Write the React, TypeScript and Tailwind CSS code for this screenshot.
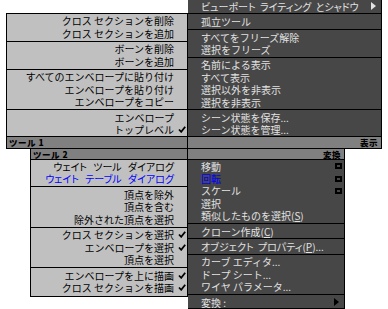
import React from "react";

type Item =
  | "sep"
  | {
      label: React.ReactNode;
      check?: boolean;
      box?: boolean;
      arrow?: boolean;
      blue?: boolean;
      palt?: boolean;
    };

const font = "font-['Noto_Sans_CJK_JP',sans-serif]";

const Check = () => (
  <svg width="8" height="7" viewBox="0 0 8 7">
    <path d="M1 3.5 L3.2 5.8 L7.2 0.8" stroke="#000" strokeWidth="1.8" fill="none" />
  </svg>
);

const U = ({ children }: { children: string }) => <span className="underline underline-offset-1">{children}</span>;

const topLeft: Item[] = [
  { label: "クロス セクションを削除" },
  { label: "クロス セクションを追加" },
  "sep",
  { label: "ボーンを削除" },
  { label: "ボーンを追加" },
  "sep",
  { label: "すべてのエンベロープに貼り付け" },
  { label: "エンベロープを貼り付け" },
  { label: "エンベロープをコピー" },
  "sep",
  { label: "エンベロープ" },
  { label: "トップレベル", check: true },
];

const topRight: Item[] = [
  { label: "ビューポート ライティング とシャドウ", arrow: true, palt: true },
  "sep",
  { label: "孤立ツール" },
  "sep",
  { label: "すべてをフリーズ解除" },
  { label: "選択をフリーズ" },
  "sep",
  { label: "名前による表示" },
  { label: "すべて表示" },
  { label: "選択以外を非表示" },
  { label: "選択を非表示" },
  "sep",
  { label: "シーン状態を保存..." },
  { label: "シーン状態を管理..." },
];

const bottomLeft: Item[] = [
  { label: "ウェイト ツール ダイアログ", palt: true },
  { label: "ウェイト テーブル ダイアログ", blue: true, palt: true },
  "sep",
  { label: "頂点を除外" },
  { label: "頂点を含む" },
  { label: "除外された頂点を選択" },
  "sep",
  { label: "クロス セクションを選択", check: true },
  { label: "エンベロープを選択", check: true },
  { label: "頂点を選択" },
  "sep",
  { label: "エンベロープを上に描画", check: true },
  { label: "クロス セクションを描画", check: true },
];

const bottomRight: Item[] = [
  { label: "移動", box: true },
  { label: "回転", box: true, blue: true },
  { label: "スケール", box: true },
  { label: "選択" },
  { label: <>類似したものを選択(<U>S</U>)</> },
  "sep",
  { label: <>クローン作成(<U>C</U>)</> },
  "sep",
  { label: <>オブジェクト プロパティ(<U>P</U>)...</>, palt: true },
  "sep",
  { label: "カーブ エディタ..." },
  { label: "ドープ シート..." },
  { label: "ワイヤ パラメータ..." },
  "sep",
  { label: "変換 :", arrow: true },
];

const Sep = () => (
  <div className="h-[3px] flex items-center">
    <div className="h-px w-full bg-black" />
  </div>
);

const LightList = ({ items }: { items: Item[] }) => (
  <>
    {items.map((it, i) =>
      it === "sep" ? (
        <Sep key={i} />
      ) : (
        <div
          key={i}
          className={`h-[12.5px] flex items-center justify-end text-[10px] leading-[11px] whitespace-nowrap ${
            it.blue ? "text-[#0000ff]" : "text-black"
          }`}
        >
          <span className={it.palt ? "[font-feature-settings:'palt'] [word-spacing:4px]" : ""}>{it.label}</span>
          <span className="w-[13px] flex justify-center pl-[3px]">{it.check && <Check />}</span>
        </div>
      )
    )}
  </>
);

const DarkList = ({ items, arrowColor }: { items: Item[]; arrowColor: string }) => (
  <>
    {items.map((it, i) =>
      it === "sep" ? (
        <Sep key={i} />
      ) : (
        <div
          key={i}
          className={`h-[12.4px] flex items-center justify-between gap-[2px] pl-[13px] pr-[2px] text-[10px] leading-[11px] whitespace-nowrap ${
            it.blue ? "text-[#0000ff]" : "text-[#e2e2e2]"
          }`}
        >
          <span className={it.palt ? "[font-feature-settings:'palt'] [word-spacing:2px]" : ""}>{it.label}</span>
          {it.box && <span className="w-[7px] h-[6px] border-2 border-black" />}
          {it.arrow && (
            <svg width="5" height="8" viewBox="0 0 5 8" className="mr-[3px] shrink-0">
              <path d="M0 0 L5 4 L0 8 Z" fill={arrowColor} />
            </svg>
          )}
        </div>
      )
    )}
  </>
);

const Header = ({ text, align, h }: { text: string; align: "left" | "right"; h: string }) => (
  <div
    className={`${h} bg-[#808080] flex items-center text-[8.5px] font-black text-black leading-[9px] tracking-[0.5px] ${
      align === "left" ? "justify-start pl-[2px]" : "justify-end pr-[3px]"
    }`}
  >
    {text}
  </div>
);

export default function App() {
  return (
    <div className={`w-[388px] h-[309px] overflow-hidden bg-white flex flex-col ${font}`}>
      <div className="h-[149px] flex items-end shrink-0">
        <div className="w-[188px] shrink-0 flex justify-end">
          <div className="w-[182px] min-w-0 overflow-hidden bg-[#c0c0c0] border-t border-l border-r border-black flex flex-col pt-[1px]">
            <LightList items={topLeft} />
            <div className="border-t border-b border-black">
              <Header text="ツール 1" align="left" h="h-[11px]" />
            </div>
          </div>
        </div>
        <div className="w-[194px] shrink-0 min-w-0 overflow-hidden bg-[#474747] border-r border-black flex flex-col">
          <DarkList items={topRight} arrowColor="#e2e2e2" />
          <div className="border-t border-b border-black">
            <Header text="表示" align="right" h="h-[11px]" />
          </div>
        </div>
      </div>
      <div className="flex items-start">
        <div className="w-[188px] shrink-0 flex justify-end">
          <div className="w-[158px] min-w-0 overflow-hidden bg-[#c0c0c0] border-l border-r border-b border-black flex flex-col pb-[2px]">
            <div className="border-b border-black">
              <Header text="ツール 2" align="left" h="h-[10px]" />
            </div>
            <LightList items={bottomLeft} />
          </div>
        </div>
        <div className="w-[157px] shrink-0 min-w-0 overflow-hidden bg-[#474747] border-r border-b border-black flex flex-col">
          <div className="border-b border-black">
            <Header text="変換" align="right" h="h-[10px]" />
          </div>
          <DarkList items={bottomRight} arrowColor="#000" />
        </div>
      </div>
    </div>
  );
}
